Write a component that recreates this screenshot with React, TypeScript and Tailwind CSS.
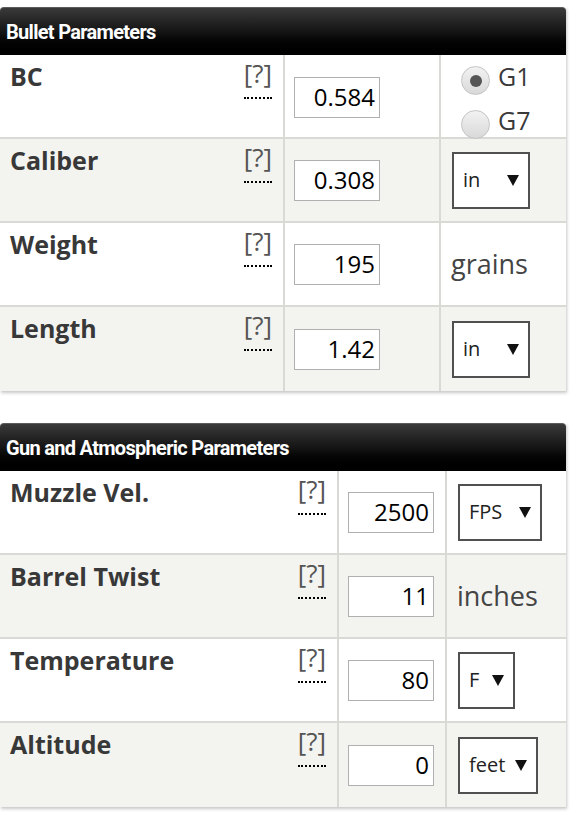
import React from 'react';

type Unit =
    | { kind: 'radio' }
    | { kind: 'select'; text: string; width: string }
    | { kind: 'text'; text: string };

interface Row {
    label: string;
    value: string;
    unit: Unit;
}

const bulletRows: Row[] = [
    { label: 'BC', value: '0.584', unit: { kind: 'radio' } },
    { label: 'Caliber', value: '0.308', unit: { kind: 'select', text: 'in', width: 'w-[78px]' } },
    { label: 'Weight', value: '195', unit: { kind: 'text', text: 'grains' } },
    { label: 'Length', value: '1.42', unit: { kind: 'select', text: 'in', width: 'w-[78px]' } },
];

const gunRows: Row[] = [
    { label: 'Muzzle Vel.', value: '2500', unit: { kind: 'select', text: 'FPS', width: 'w-[84px]' } },
    { label: 'Barrel Twist', value: '11', unit: { kind: 'text', text: 'inches' } },
    { label: 'Temperature', value: '80', unit: { kind: 'select', text: 'F', width: 'w-[57px]' } },
    { label: 'Altitude', value: '0', unit: { kind: 'select', text: 'feet', width: 'w-[80px]' } },
];

const Triangle = () => (
    <svg width="12" height="11" viewBox="0 0 12 11" className="shrink-0">
        <polygon points="0,0 12,0 6,11" fill="#111" />
    </svg>
);

const Radio = ({ checked }: { checked: boolean }) => (
    <span className="mt-[4px] flex h-[29px] w-[29px] shrink-0 items-center justify-center rounded-full border border-[#c4c4c4] bg-gradient-to-b from-[#f2f2f2] to-[#d9d9d9]">
        {checked && <span className="h-[12px] w-[12px] rounded-full bg-[#555]" />}
    </span>
);

const UnitCell = ({ unit }: { unit: Unit }) => {
    if (unit.kind === 'radio') {
        return (
            <div className="flex flex-col gap-[11px] pl-[20px] pt-[7px] text-[25px] leading-[28px] text-[#3a3a3a]">
                <div className="flex items-start gap-[8px]"><Radio checked />G1</div>
                <div className="flex items-start gap-[8px]"><Radio checked={false} />G7</div>
            </div>
        );
    }
    if (unit.kind === 'text') {
        return <div className="flex h-full items-center pl-[10px] text-[27px] text-[#444]">{unit.text}</div>;
    }
    return (
        <div className="flex h-full items-center pl-[11px]">
            <div className={`flex h-[57px] items-center justify-between border-2 border-[#505050] bg-white pl-[9px] pr-[9px] text-[20px] text-[#222] ${unit.width}`}>
                <span>{unit.text}</span>
                <Triangle />
            </div>
        </div>
    );
};

const ParamTable = ({ title, rows, cols }: { title: string; rows: Row[]; cols: string }) => (
    <div className="w-[566px] shadow-[1px_2px_3px_rgba(0,0,0,0.22)]">
        <div className="flex h-[48px] items-center rounded-t-[4px] border-t border-[#5a5a5a] bg-gradient-to-b from-[#3a3a3a] via-[#151515] to-[#000] pl-[6px] font-['Roboto',sans-serif] text-[20px] font-bold tracking-[-0.7px] text-white">
            {title}
        </div>
        {rows.map((row, i) => (
            <div
                key={row.label}
                className={`grid h-[84px] ${cols} ${i < rows.length - 1 ? 'border-b-2 border-[#d9d9d6]' : ''} ${i % 2 === 1 ? 'bg-[#f3f3ef]' : 'bg-white'}`}
            >
                <div className="flex items-start justify-between pl-[10px] pr-[11px] pt-[7px]">
                    <span className="text-[25px] font-bold leading-[28px] text-[#383838]">{row.label}</span>
                    <span className="-mt-[5px] border-b-2 border-dotted border-black pb-[8px] text-[26px] leading-[32px] text-[#555]">[?]</span>
                </div>
                <div className="flex items-center border-l-2 border-[#d9d9d6] pl-[9px]">
                    <div className="flex h-[41px] w-[86px] items-center justify-end border border-[#b0b0b0] bg-white pr-[4px] text-[24px] text-black">
                        {row.value}
                    </div>
                </div>
                <div className="border-l-2 border-[#d9d9d6]">
                    <UnitCell unit={row.unit} />
                </div>
            </div>
        ))}
    </div>
);

export default function App() {
    return (
        <div className="min-h-[818px] w-[571px] bg-white pt-[7px] font-['Open_Sans',sans-serif]">
            <ParamTable title="Bullet Parameters" rows={bulletRows} cols="grid-cols-[283px_156px_127px]" />
            <div className="h-[32px]" />
            <ParamTable title="Gun and Atmospheric Parameters" rows={gunRows} cols="grid-cols-[337px_108px_121px]" />
        </div>
    );
}
